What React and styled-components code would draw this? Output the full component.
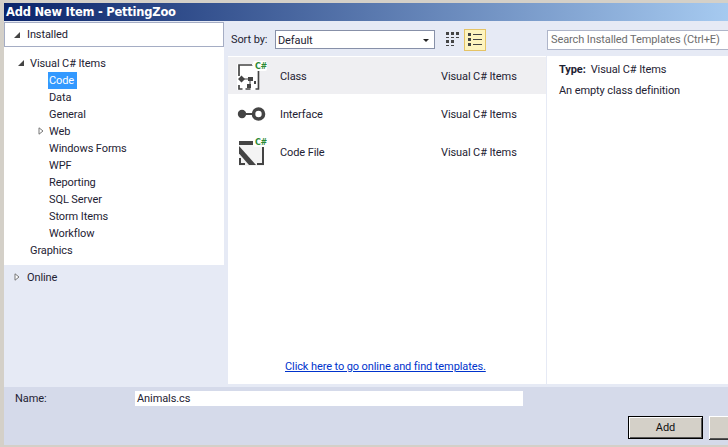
import React from "react";
import styled, { createGlobalStyle } from "styled-components";

const Global = createGlobalStyle`
  html, body { margin: 0; padding: 0; width: 728px; height: 447px; overflow: hidden; background: #d4d0c8; }
  #root { width: 728px; height: 447px; }
  * { box-sizing: border-box; }
`;
const Dialog = styled.div`
  width: 728px; height: 447px; display: flex; flex-direction: column;
  padding: 3px 0 2px 4px; background: #d4d0c8; overflow: hidden;
  font-family: "Roboto", "Noto Sans", sans-serif; font-size: 11px; letter-spacing: -0.1px; color: #1e2233;
`;
const TitleBar = styled.div`
  height: 18px; flex: none; padding-left: 2px; display: flex; align-items: center;
  background: linear-gradient(90deg, #0a246a, #a6caf0);
  color: #fff; font: bold 11.5px/18px "DejaVu Sans", sans-serif; letter-spacing: -0.02em;
`;
const Content = styled.div`
  flex: 1; min-height: 0; display: flex; background: #e6eaf5; padding-bottom: 3px;
`;
const Side = styled.div`
  width: 220px; flex: none; display: flex; flex-direction: column; margin-top: 1px;
`;
const SideHeader = styled.div`
  height: 25px; flex: none; display: flex; align-items: center; gap: 6px; padding-left: 8px;
  background: #fff; border: 1px solid #a5adc4;
`;
const Tree = styled.div`
  height: 218px; flex: none; background: #fff; padding-top: 8px; display: flex; flex-direction: column;
`;
const TreeRow = styled.div`
  height: 17px; flex: none; display: flex; align-items: center; position: relative;
  padding-left: ${p => p.$indent}px;
`;
const TreeLabel = styled.span`
  padding: 0 3px 0 1px; height: 17px; line-height: 17px;
  ${p => p.$selected && "background:#3399ff;color:#fff;"}
`;
const Caret = styled.svg`
  width: 8px; height: 8px; flex: none;
`;
const TreeCaret = styled(Caret)`
  position: absolute; left: ${p => p.$left}px; top: 4px;
`;
const OnlineRow = styled.div`
  height: 24px; display: flex; align-items: center; padding-left: 9px; gap: 6px;
`;
const Middle = styled.div`
  width: 319px; flex: none; margin-left: 4px; display: flex; flex-direction: column;
`;
const Toolbar = styled.div`
  height: 35px; flex: none; display: flex; align-items: center; padding: 2px 0 0 3px;
`;
const SortLabel = styled.span` width: 44px; flex: none; `;
const Select = styled.div`
  width: 160px; height: 19px; flex: none; background: #fff; border: 1px solid #8790a8;
  display: flex; align-items: center; justify-content: space-between; padding: 1px 5px 0 2px;
`;
const Arrow = styled.span`
  width: 0; height: 0; border-left: 3px solid transparent; border-right: 3px solid transparent;
  border-top: 3px solid #222; margin-top: 1px;
`;
const ViewButton = styled.div`
  width: 22px; height: 22px; flex: none; display: flex; align-items: center; justify-content: center;
  margin-left: ${p => p.$gap}px;
  ${p => p.$active && "background:#fdf4bf;border:1px solid #e5c365;"}
`;
const List = styled.div`
  flex: 1; background: #fff; display: flex; flex-direction: column; position: relative;
  border-right: 1px solid #e6eaf5; padding-top: 1px;
`;
const ListRow = styled.div`
  height: 37px; flex: none; display: flex; align-items: center; margin-bottom: 1px;
  ${p => p.$selected && "background:#efeff2;"}
`;
const ListIcon = styled.div`
  width: 52px; flex: none; padding-left: 9px; display: flex; align-items: center;
`;
const ItemName = styled.span` width: 161px; flex: none; padding-top: 2px; `;
const ItemType = styled.span` flex: none; padding-top: 2px; `;
const OnlineLink = styled.a`
  position: absolute; left: 57px; bottom: 11px; color: #0033cc; text-decoration: underline;
`;
const Details = styled.div`
  flex: 1; min-width: 0; display: flex; flex-direction: column;
`;
const SearchWrap = styled.div`
  height: 35px; flex: none; display: flex; align-items: center; padding-top: 2px;
`;
const Search = styled.div`
  flex: 1; height: 20px; background: #fff; border: 1px solid #aeb5c9; border-right: 0; color: #6d6d6d;
  padding-left: 3px; line-height: 18px; white-space: nowrap;
`;
const Info = styled.div`
  flex: 1; background: #fff; padding: 6px 0 0 12px; display: flex; flex-direction: column; gap: 5px;
`;
const InfoLine = styled.div` height: 16px; line-height: 16px; white-space: nowrap; `;
const InfoKey = styled.b` margin-right: 5px; `;
const Footer = styled.div`
  height: 58px; flex: none; background: #d5daea; display: flex; flex-direction: column;
`;
const NameRow = styled.div`
  height: 15px; margin-top: 4px; display: flex; align-items: center; padding-left: 11px;
`;
const NameLabel = styled.span` width: 120px; flex: none; `;
const NameInput = styled.div`
  width: 388px; height: 15px; background: #fff; padding-left: 2px; line-height: 15px; flex: none;
`;
const Buttons = styled.div`
  margin-top: 10px; display: flex; padding-left: 624px; gap: 6px;
`;
const Button = styled.div`
  width: 75px; height: 23px; flex: none; background: #d4d0c8; color: #111;
  display: flex; align-items: center; justify-content: center;
  ${p => p.$default
    ? "border:1px solid #000; box-shadow: inset 1px 1px 0 #fff, inset -1px -1px 0 #555;"
    : "box-shadow: inset 1px 1px 0 #fff, inset -1px -1px 0 #555, 0 1px 0 #333;"}
`;
const Open = ({ left }) => {
  const s = <path d="M7 1V7H1z" fill="#444" />;
  return left !== undefined
    ? <TreeCaret $left={left} viewBox="0 0 8 8">{s}</TreeCaret>
    : <Caret viewBox="0 0 8 8">{s}</Caret>;
};
const Closed = ({ left }) => {
  const s = <path d="M2 .8 6 4 2 7.2z" fill="#fff" stroke="#777" strokeWidth="1" />;
  return left !== undefined
    ? <TreeCaret $left={left} viewBox="0 0 8 8">{s}</TreeCaret>
    : <Caret viewBox="0 0 8 8">{s}</Caret>;
};
const CSharp = () => (
  <>
    <rect x="16" y="0" width="14" height="10" fill="#fff" rx="2" />
    <text x="18" y="8" fontFamily="DejaVu Sans, sans-serif" fontWeight="bold" fontSize="8" letterSpacing="-0.3" fill="#2a8a34">C#</text>
  </>
);
const ClassIcon = () => (
  <svg width="30" height="30" viewBox="0 0 30 30">
    <path d="M0 3h17l6 6v20H0z" fill="#fff" />
    <path d="M2 15V4h13M16 4l6 6M21.500 10v18h-3M2 24v4h3.500M8.500 28h5" fill="none" stroke="#444" strokeWidth="1.700" />
    <path d="M1 18l3.500-3.500L8 18l-3.500 3.500zM11 16h5v4h-5zM10 23h4v4h-4zM17 20h2v3h-2z" fill="#444" />
    <path d="M7 18h6M13 19v6" stroke="#444" strokeWidth="1" />
    <CSharp />
  </svg>
);
const InterfaceIcon = () => (
  <svg width="30" height="30" viewBox="0 0 30 30">
    <circle cx="5" cy="15" r="4.200" fill="#444" />
    <path d="M8 15h8" stroke="#444" strokeWidth="2" />
    <circle cx="21.500" cy="15" r="5" fill="#fff" stroke="#444" strokeWidth="3.600" />
  </svg>
);
const FileIcon = () => (
  <svg width="30" height="30" viewBox="0 0 30 30">
    <path d="M2 6h25v23H2z" fill="#f4f4f4" />
    <path d="M2 4h16v4H2z" fill="#444" />
    <path d="M2 9l17 19h-7L2 16.500z" fill="#444" />
    <path d="M2 21v7h6v-2H4v-5zM25 10h2v18h-7v-2h5z" fill="#444" />
    <CSharp />
  </svg>
);
const GridIcon = () => (
  <svg width="15" height="15" viewBox="0 0 15 15" fill="#444">
    <path d="M0 0h3v3H0zM5 0h3v3H5zM10 0h3v3h-3zM0 5h3v1H0zM5 5h3v1H5zM10 5h3v1h-3zM0 8h3v3H0zM5 8h3v3H5zM0 13h3v1H0zM5 13h3v1H5z" />
  </svg>
);
const ListViewIcon = () => (
  <svg width="16" height="15" viewBox="0 0 16 15" fill="#444">
    <path d="M1 1h3v3H1zM1 6h3v3H1zM1 11h3v3H1z" />
    <path d="M6 2h9v1H6zM6 7h9v1H6zM6 12h9v1H6z" />
  </svg>
);

const children = [
  ["Data"], ["General"], ["Web", true], ["Windows Forms"], ["WPF"], ["Reporting"],
  ["SQL Server"], ["Storm Items"], ["Workflow"],
];
const templates = [
  { name: "Class", icon: <ClassIcon />, selected: true },
  { name: "Interface", icon: <InterfaceIcon /> },
  { name: "Code File", icon: <FileIcon /> },
];

export default function App() {
  return (
    <Dialog>
      <Global />
      <TitleBar>Add New Item - PettingZoo</TitleBar>
      <Content>
        <Side>
          <SideHeader><Open />Installed</SideHeader>
          <Tree>
            <TreeRow $indent={25}><Open left={13} /><TreeLabel>Visual C# Items</TreeLabel></TreeRow>
            <TreeRow $indent={44}><TreeLabel $selected>Code</TreeLabel></TreeRow>
            {children.map(([label, closed]) => (
              <TreeRow key={label} $indent={44}>
                {closed && <Closed left={33} />}
                <TreeLabel>{label}</TreeLabel>
              </TreeRow>
            ))}
            <TreeRow $indent={25}><TreeLabel>Graphics</TreeLabel></TreeRow>
          </Tree>
          <OnlineRow><Closed />Online</OnlineRow>
        </Side>
        <Middle>
          <Toolbar>
            <SortLabel>Sort by:</SortLabel>
            <Select>Default<Arrow /></Select>
            <ViewButton $gap={7}><GridIcon /></ViewButton>
            <ViewButton $gap={0} $active><ListViewIcon /></ViewButton>
          </Toolbar>
          <List>
            {templates.map(t => (
              <ListRow key={t.name} $selected={t.selected}>
                <ListIcon>{t.icon}</ListIcon>
                <ItemName>{t.name}</ItemName>
                <ItemType>Visual C# Items</ItemType>
              </ListRow>
            ))}
            <OnlineLink>Click here to go online and find templates.</OnlineLink>
          </List>
        </Middle>
        <Details>
          <SearchWrap><Search>Search Installed Templates (Ctrl+E)</Search></SearchWrap>
          <Info>
            <InfoLine><InfoKey>Type:</InfoKey>Visual C# Items</InfoLine>
            <InfoLine>An empty class definition</InfoLine>
          </Info>
        </Details>
      </Content>
      <Footer>
        <NameRow><NameLabel>Name:</NameLabel><NameInput>Animals.cs</NameInput></NameRow>
        <Buttons><Button $default>Add</Button><Button /></Buttons>
      </Footer>
    </Dialog>
  );
}
